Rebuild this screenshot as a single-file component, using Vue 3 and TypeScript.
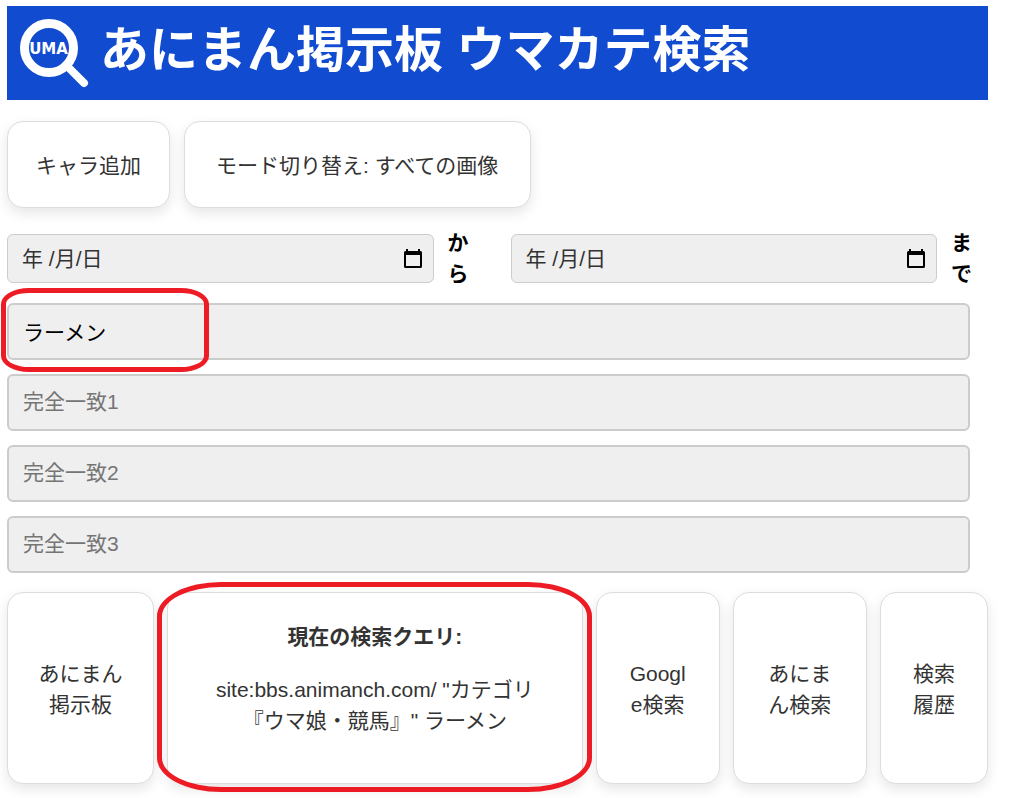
<script setup lang="ts">
import { ref } from 'vue'

interface DateField {
  id: string
  suffix: string
  value: string
}

interface TermField {
  id: string
  label: string
  value: string
  marked: boolean
}

const dates = ref<DateField[]>([
  { id: 'date-from', suffix: 'から', value: '' },
  { id: 'date-to', suffix: 'まで', value: '' },
])

const terms = ref<TermField[]>([
  { id: 'keyword', label: 'キーワード', value: 'ラーメン', marked: true },
  { id: 'exact-1', label: '完全一致1', value: '', marked: false },
  { id: 'exact-2', label: '完全一致2', value: '', marked: false },
  { id: 'exact-3', label: '完全一致3', value: '', marked: false },
])
</script>

<template>
  <div class="page">
    <header class="banner">
      <svg class="logo" viewBox="0 0 80 80" aria-hidden="true">
        <circle cx="34" cy="35" r="24.5" fill="none" stroke="#fff" stroke-width="9" />
        <path d="M51 52 L69 70" stroke="#fff" stroke-width="8" stroke-linecap="round" />
        <text x="33.500" y="41" text-anchor="middle" class="logo-text">UMA</text>
      </svg>
      <h1>あにまん掲示板 ウマカテ検索</h1>
    </header>

    <div class="toolbar">
      <button type="button" class="card">キャラ追加</button>
      <button type="button" class="card mode">モード切り替え: すべての画像</button>
    </div>

    <form class="form" @submit.prevent>
      <div class="dates">
        <div v-for="d in dates" :key="d.id" class="date">
          <div class="date-box">
            <input :id="d.id" v-model="d.value" type="text" placeholder="年 /月/日" />
            <button type="button" class="picker" aria-label="日付を選択">
              <svg viewBox="0 0 20 22" aria-hidden="true">
                <path
                  fill="#000"
                  fill-rule="evenodd"
                  d="M3 1h2v2h10V1h2v2h.5A1.5 1.5 0 0 1 19 4.500V18.500A1.500 1.500 0 0 1 17.500 20H2.500A1.500 1.500 0 0 1 1 18.500V4.500A1.500 1.500 0 0 1 2.500 3H3ZM3 7V18H17V7Z"
                />
              </svg>
            </button>
          </div>
          <label :for="d.id">{{ d.suffix }}</label>
        </div>
      </div>

      <div v-for="t in terms" :key="t.id" class="term">
        <input :id="t.id" v-model="t.value" type="text" :placeholder="t.label" :aria-label="t.label" />
        <span v-if="t.marked" class="mark mark-field"></span>
      </div>
    </form>

    <div class="actions">
      <button type="button" class="card">あにまん掲示板</button>
      <section class="card query">
        <h2>現在の検索クエリ:</h2>
        <p>site:bbs.animanch.com/ "カテゴリ『ウマ娘・競馬』" ラーメン</p>
        <span class="mark mark-query"></span>
      </section>
      <button type="button" class="card">Google検索</button>
      <button type="button" class="card">あにまん検索</button>
      <button type="button" class="card">検索履歴</button>
    </div>
  </div>
</template>

<style>
body {
  margin: 0;
  background: #fff;
}
</style>

<style scoped>
.page {
  padding: 6px 25px 14px 7px;
  font-family: "Liberation Sans", "Noto Sans CJK JP", sans-serif;
  font-size: 21px;
  line-height: 31px;
  color: #333;
}

.page *,
.page {
  box-sizing: border-box;
}

button,
input {
  font: inherit;
  color: inherit;
}

.banner {
  display: flex;
  align-items: center;
  gap: 5px;
  padding: 7px 8px;
  background: #114bd0;
  color: #fff;
}

.logo {
  flex: none;
  width: 80px;
  height: 80px;
}

.logo-text {
  fill: #fff;
  font-family: "DejaVu Sans", sans-serif;
  font-size: 15px;
  font-weight: 700;
}

h1 {
  margin: 0;
  padding-bottom: 6px;
  font-size: 49px;
  line-height: 72px;
  font-weight: 700;
}

.card {
  padding: 28px 28px 26px;
  border: 1px solid #ddd;
  border-radius: 16px;
  background: #fff;
  box-shadow: 0 5px 13px rgba(0, 0, 0, 0.1);
  text-align: center;
}

.toolbar {
  display: flex;
  gap: 14px;
  margin: 21px 0 19px;
}

.mode {
  padding-right: 32px;
  padding-left: 31px;
}

.form {
  display: flex;
  flex-direction: column;
  gap: 14px;
  margin-right: 18px;
}

.dates {
  display: grid;
  grid-template-columns: 1fr 1fr;
  gap: 42px;
  margin-right: -2px;
}

.date {
  display: flex;
  align-items: center;
  gap: 14px;
}

.date label {
  width: 21px;
  font-weight: 700;
  color: #000;
  word-break: break-all;
}

.date-box {
  display: flex;
  align-items: center;
  flex: 1;
  min-width: 0;
  height: 49px;
  padding: 1px 10px 0 14px;
  border: 1px solid #ccc;
  border-radius: 6px;
  background: #efefef;
}

.date-box input {
  flex: 1;
  min-width: 0;
  padding: 0;
  border: 0;
  background: transparent;
}

.date-box input::placeholder {
  color: #333;
  opacity: 1;
}

.picker {
  display: flex;
  padding: 0;
  border: 0;
  background: transparent;
}

.picker svg {
  width: 20px;
  height: 22px;
}

.term {
  position: relative;
}

.term input {
  display: block;
  width: 100%;
  height: 57px;
  padding: 0 14px 2px;
  border: 2px solid #ccc;
  border-radius: 6px;
  background: #efefef;
  color: #000;
}

.term input::placeholder {
  color: #757575;
  opacity: 1;
}

.mark {
  position: absolute;
  border: 5px solid #ed1c24;
  pointer-events: none;
}

.mark-field {
  top: -15px;
  left: -6px;
  width: 208px;
  height: 84px;
  border-radius: 28px / 16px;
}

.mark-query {
  inset: -11px -10px -9px -11px;
  border-radius: 64px / 34px;
}

.actions {
  display: grid;
  grid-template-columns: 147fr 415fr 124fr 134fr 108fr;
  gap: 13px;
  margin-top: 19px;
}

.actions button {
  word-break: break-all;
}

.query {
  position: relative;
}

.query h2 {
  margin: 0;
  font-size: 21px;
  font-weight: 700;
}

.query p {
  margin: 22px 0 21px;
  padding: 0 12px;
}
</style>
